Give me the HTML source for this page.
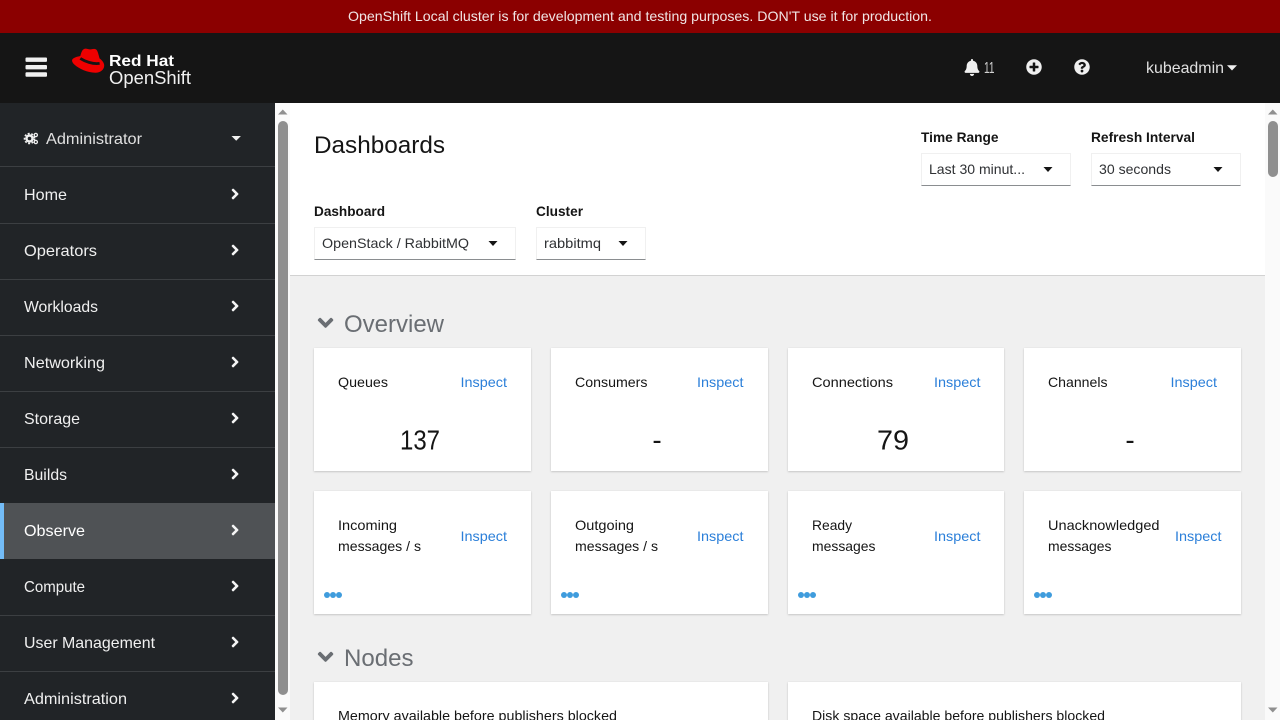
<!DOCTYPE html>
<html lang="en">
<head>
<meta charset="utf-8">
<title>Dashboards · Red Hat OpenShift</title>
<style>
html,body{margin:0;padding:0;width:1280px;height:720px;overflow:hidden;background:#f0f0f0}
body{position:relative;font-family:"Liberation Sans",sans-serif}
.b{position:absolute;box-sizing:border-box}
.card{position:absolute;background:#fff;box-shadow:0 1px 2px rgba(3,3,3,.16),0 0 2px rgba(3,3,3,.06)}
.sel{position:absolute;background:#fff;box-sizing:border-box;border:1px solid #f0f0f0;border-bottom:1px solid #8a8d90}
svg.o{position:absolute;left:0;top:0}
text{font-family:"Liberation Sans",sans-serif;font-size:14px;fill:#151515}
.w{fill:#fff}.nav{font-size:16px;fill:#f0f0f0}.lnk{fill:#2b7fd9}.h2{font-size:24px;fill:#6a6e73}.lb{font-weight:bold}.sv{fill:#2f3134}.num{font-size:28px}
</style>
</head>
<body>
<div class="b" style="left:0;top:0;width:1280px;height:33px;background:#8b0000"></div>
<div class="b" style="left:0;top:33px;width:1280px;height:70px;background:#151515"></div>
<div class="b" style="left:0;top:103px;width:275px;height:617px;background:#212427"></div>
<div class="b" style="left:0;top:166px;width:275px;height:1px;background:#3c3f42"></div>
<div class="b" style="left:0;top:223px;width:275px;height:1px;background:#3c3f42"></div>
<div class="b" style="left:0;top:279px;width:275px;height:1px;background:#3c3f42"></div>
<div class="b" style="left:0;top:335px;width:275px;height:1px;background:#3c3f42"></div>
<div class="b" style="left:0;top:391px;width:275px;height:1px;background:#3c3f42"></div>
<div class="b" style="left:0;top:447px;width:275px;height:1px;background:#3c3f42"></div>
<div class="b" style="left:0;top:503px;width:275px;height:1px;background:#3c3f42"></div>
<div class="b" style="left:0;top:615px;width:275px;height:1px;background:#3c3f42"></div>
<div class="b" style="left:0;top:671px;width:275px;height:1px;background:#3c3f42"></div>
<div class="b" style="left:0;top:503px;width:275px;height:56px;background:#4f5255;border-left:4px solid #73bcf7"></div>

<div class="b" style="left:275px;top:103px;width:15px;height:617px;background:#fafafa"></div>
<div class="b" style="left:278px;top:121px;width:10px;height:574px;border-radius:5px;background:#8f8f8f"></div>

<div class="b" style="left:290px;top:103px;width:975px;height:172px;background:#fff"></div>
<div class="b" style="left:290px;top:275px;width:975px;height:1px;background:#d2d2d2"></div>
<div class="b" style="left:1265px;top:103px;width:15px;height:617px;background:#fafafa"></div>
<div class="b" style="left:1268px;top:121px;width:10px;height:56px;border-radius:5px;background:#8f8f8f"></div>

<div class="sel" style="left:921px;top:153px;width:150px;height:33px"></div>
<div class="sel" style="left:1091px;top:153px;width:150px;height:33px"></div>
<div class="sel" style="left:314px;top:227px;width:202px;height:33px"></div>
<div class="sel" style="left:536px;top:227px;width:110px;height:33px"></div>

<div class="card" style="left:314px;top:348px;width:217px;height:123px"></div>
<div class="card" style="left:551px;top:348px;width:217px;height:123px"></div>
<div class="card" style="left:788px;top:348px;width:216px;height:123px"></div>
<div class="card" style="left:1024px;top:348px;width:217px;height:123px"></div>
<div class="card" style="left:314px;top:491px;width:217px;height:123px"></div>
<div class="card" style="left:551px;top:491px;width:217px;height:123px"></div>
<div class="card" style="left:788px;top:491px;width:216px;height:123px"></div>
<div class="card" style="left:1024px;top:491px;width:217px;height:123px"></div>
<div class="card" style="left:314px;top:682px;width:454px;height:60px"></div>
<div class="card" style="left:788px;top:682px;width:453px;height:60px"></div>

<svg class="o" width="1280" height="720" viewBox="0 0 1280 720" xmlns="http://www.w3.org/2000/svg">
<defs>
<path id="ar" d="M285.476 272.971L91.132 467.314c-9.373 9.373-24.569 9.373-33.941 0l-22.667-22.667c-9.357-9.357-9.375-24.522-.04-33.901L188.505 256 34.484 101.255c-9.335-9.379-9.317-24.544.04-33.901l22.667-22.667c9.373-9.373 24.569-9.373 33.941 0L285.475 239.03c9.373 9.372 9.373 24.568.001 33.941z"/>
<path id="ad" d="M143 352.3L7 216.3c-9.4-9.4-9.4-24.6 0-33.9l22.6-22.6c9.4-9.4 24.6-9.4 33.9 0l96.4 96.4 96.4-96.4c9.4-9.4 24.6-9.4 33.9 0l22.6 22.6c9.4 9.4 9.4 24.6 0 33.9l-136 136c-9.2 9.4-24.4 9.4-33.8 0z"/>
<g id="dots" fill="#3f9cdd"><circle cx="3" cy="3" r="3"/><circle cx="9" cy="3" r="3"/><circle cx="15" cy="3" r="3"/></g>
</defs>

<text x="640" y="21" text-anchor="middle" class="w" textLength="584" lengthAdjust="spacingAndGlyphs" style="fill:#f0e4e4">OpenShift Local cluster is for development and testing purposes. DON'T use it for production.</text>

<g fill="#f0f0f0">
<rect x="25.5" y="57.5" width="21.5" height="4.4" rx="1"/>
<rect x="25.5" y="65" width="21.5" height="4.4" rx="1"/>
<rect x="25.5" y="72.3" width="21.5" height="4.4" rx="1"/>
</g>

<path fill="#ee0000" d="M80.3 56C81.3 52.5 82 50 84 49 86 48 88 49.4 90 49.4 92 49.4 94 48.2 96 49.4 97.6 50.4 98.5 54.5 99.6 58.5 101.5 59.8 104.2 62.5 104.2 65.5 104.2 70 100 72.7 95.5 72.7 87.5 72.7 79 68.8 74.6 64.8 72.8 63.1 71.6 61.3 72.2 59.8 72.9 57.9 76.5 56.8 80.3 56Z"/>
<path fill="none" stroke="#151515" stroke-width="2.8" d="M80.3 58.4C85 61.4 92.5 64.4 99.6 63.4"/>

<text x="109" y="66" class="w lb" style="font-size:16px" textLength="65" lengthAdjust="spacingAndGlyphs">Red Hat</text>
<text x="109" y="84" style="font-size:18px;fill:#f0f0f0" textLength="82" lengthAdjust="spacingAndGlyphs">OpenShift</text>

<svg x="964" y="59" width="16" height="17" viewBox="0 0 448 512" fill="#f0f0f0"><path d="M224 512c35.32 0 63.97-28.65 63.97-64H160.03c0 35.35 28.65 64 63.97 64zm215.39-149.71c-19.32-20.76-55.47-51.99-55.47-154.29 0-77.7-54.48-139.9-127.94-155.16V32c0-17.67-14.32-32-31.98-32s-31.98 14.33-31.98 32v20.84C118.56 68.1 64.08 130.3 64.08 208c0 102.3-36.15 133.53-55.47 154.29-6 6.45-8.66 14.16-8.61 21.71.11 16.4 12.98 32 32.1 32h383.8c19.12 0 32-15.6 32.1-32 .05-7.55-2.61-15.27-8.61-21.71z"/></svg>
<text x="984" y="73" style="font-size:16px;fill:#d2d2d2" textLength="10.5" lengthAdjust="spacingAndGlyphs">11</text>
<svg x="1026" y="59" width="16" height="16" viewBox="0 0 512 512" fill="#f0f0f0"><path d="M256 8C119 8 8 119 8 256s111 248 248 248 248-111 248-248S393 8 256 8zm144 276c0 6.6-5.4 12-12 12h-92v92c0 6.6-5.4 12-12 12h-56c-6.6 0-12-5.4-12-12v-92h-92c-6.6 0-12-5.4-12-12v-56c0-6.6 5.4-12 12-12h92v-92c0-6.6 5.4-12 12-12h56c6.6 0 12 5.4 12 12v92h92c6.6 0 12 5.4 12 12v56z"/></svg>
<svg x="1074" y="59" width="16" height="16" viewBox="0 0 512 512" fill="#f0f0f0"><path d="M504 256c0 136.997-111.043 248-248 248S8 392.997 8 256C8 119.083 119.043 8 256 8s248 111.083 248 248zM262.655 90c-54.497 0-89.255 22.957-116.549 63.758-3.536 5.286-2.353 12.415 2.715 16.258l34.699 26.31c5.205 3.947 12.621 3.008 16.665-2.122 17.864-22.658 30.113-35.797 57.303-35.797 20.429 0 45.698 13.148 45.698 32.958 0 14.976-12.363 22.667-32.534 33.976C247.128 238.528 216 254.941 216 296v4c0 6.627 5.373 12 12 12h56c6.627 0 12-5.373 12-12v-1.333c0-28.462 83.186-29.647 83.186-106.667 0-58.002-60.165-102-116.531-102zM256 338c-25.365 0-46 20.635-46 46 0 25.364 20.635 46 46 46s46-20.636 46-46c0-25.365-20.635-46-46-46z"/></svg>
<text x="1146" y="73" class="nav" style="fill:#e0e0e0" textLength="78" lengthAdjust="spacingAndGlyphs">kubeadmin</text>
<path fill="#f0f0f0" d="M1227 65.3h10l-5 5.2z"/>

<g fill="#f0f0f0">
<circle cx="29.5" cy="138.5" r="3" fill="none" stroke="#f0f0f0" stroke-width="2.4"/>
<circle cx="29.5" cy="138.5" r="5" fill="none" stroke="#f0f0f0" stroke-width="1.6" stroke-dasharray="2 1.6"/>
<circle cx="35.8" cy="135" r="1.6" fill="none" stroke="#f0f0f0" stroke-width="1.3"/>
<circle cx="35.8" cy="142" r="1.6" fill="none" stroke="#f0f0f0" stroke-width="1.3"/>
</g>
<text x="46" y="144" class="nav" style="fill:#e0e0e0" textLength="96" lengthAdjust="spacingAndGlyphs">Administrator</text>
<path fill="#f0f0f0" d="M231.5 136h9.4l-4.7 4.8z"/>

<text x="24" y="200" class="nav" textLength="43" lengthAdjust="spacingAndGlyphs">Home</text>
<text x="24" y="256" class="nav" textLength="73" lengthAdjust="spacingAndGlyphs">Operators</text>
<text x="24" y="312" class="nav" textLength="74" lengthAdjust="spacingAndGlyphs">Workloads</text>
<text x="24" y="368" class="nav" textLength="81" lengthAdjust="spacingAndGlyphs">Networking</text>
<text x="24" y="424" class="nav" textLength="56" lengthAdjust="spacingAndGlyphs">Storage</text>
<text x="24" y="480" class="nav" textLength="43" lengthAdjust="spacingAndGlyphs">Builds</text>
<text x="24" y="536" class="nav" style="fill:#fff" textLength="61" lengthAdjust="spacingAndGlyphs">Observe</text>
<text x="24" y="592" class="nav" textLength="61" lengthAdjust="spacingAndGlyphs">Compute</text>
<text x="24" y="648" class="nav" textLength="131" lengthAdjust="spacingAndGlyphs">User Management</text>
<text x="24" y="704" class="nav" textLength="103" lengthAdjust="spacingAndGlyphs">Administration</text>

<g fill="#f5f5f5" stroke="#f5f5f5" stroke-width="30" stroke-linejoin="round">
<use href="#ar" transform="translate(231.4 188.1) scale(.023)"/>
<use href="#ar" transform="translate(231.4 244.1) scale(.023)"/>
<use href="#ar" transform="translate(231.4 300.1) scale(.023)"/>
<use href="#ar" transform="translate(231.4 356.1) scale(.023)"/>
<use href="#ar" transform="translate(231.4 412.1) scale(.023)"/>
<use href="#ar" transform="translate(231.4 468.1) scale(.023)"/>
<use href="#ar" transform="translate(231.4 524.1) scale(.023)"/>
<use href="#ar" transform="translate(231.4 580.1) scale(.023)"/>
<use href="#ar" transform="translate(231.4 636.1) scale(.023)"/>
<use href="#ar" transform="translate(231.4 692.1) scale(.023)"/>
</g>

<g fill="#8f8f8f">
<path d="M278 114.5h9.5l-4.7-5z"/>
<path d="M278 707.5h9.5l-4.7 5z"/>
<path d="M1268 114.5h9.5l-4.7-5z"/>
<path d="M1268 707.5h9.5l-4.7 5z"/>
</g>

<text x="314" y="153" style="font-size:24px" textLength="131" lengthAdjust="spacingAndGlyphs">Dashboards</text>
<text x="921" y="142" class="lb" textLength="77.5" lengthAdjust="spacingAndGlyphs">Time Range</text>
<text x="1091" y="142" class="lb" textLength="104" lengthAdjust="spacingAndGlyphs">Refresh Interval</text>
<text x="314" y="216" class="lb" textLength="71" lengthAdjust="spacingAndGlyphs">Dashboard</text>
<text x="536" y="216" class="lb" textLength="47" lengthAdjust="spacingAndGlyphs">Cluster</text>

<text x="929" y="174" class="sv" textLength="96" lengthAdjust="spacingAndGlyphs">Last 30 minut...</text>
<text x="1099" y="174" class="sv" textLength="72" lengthAdjust="spacingAndGlyphs">30 seconds</text>
<text x="322" y="248" class="sv" textLength="147" lengthAdjust="spacingAndGlyphs">OpenStack / RabbitMQ</text>
<text x="544" y="248" class="sv" textLength="57" lengthAdjust="spacingAndGlyphs">rabbitmq</text>
<g fill="#151515">
<path d="M1043.5 167h9l-4.5 5z"/>
<path d="M1213.5 167h9l-4.5 5z"/>
<path d="M488.5 241h9l-4.5 5z"/>
<path d="M618.5 241h9l-4.5 5z"/>
</g>

<g fill="#6a6e73">
<use href="#ad" transform="translate(317.8 310.4) scale(.0485)"/>
<use href="#ad" transform="translate(317.8 644.4) scale(.0485)"/>
</g>
<text x="344" y="332" class="h2" textLength="100" lengthAdjust="spacingAndGlyphs">Overview</text>
<text x="344" y="666" class="h2" textLength="69.5" lengthAdjust="spacingAndGlyphs">Nodes</text>

<text x="338" y="387" textLength="50" lengthAdjust="spacingAndGlyphs">Queues</text>
<text x="575" y="387" textLength="72.5" lengthAdjust="spacingAndGlyphs">Consumers</text>
<text x="812" y="387" textLength="81" lengthAdjust="spacingAndGlyphs">Connections</text>
<text x="1048" y="387" textLength="59.5" lengthAdjust="spacingAndGlyphs">Channels</text>
<text x="460.5" y="387" class="lnk" textLength="46.5" lengthAdjust="spacingAndGlyphs">Inspect</text>
<text x="697" y="387" class="lnk" textLength="46.5" lengthAdjust="spacingAndGlyphs">Inspect</text>
<text x="934" y="387" class="lnk" textLength="46.5" lengthAdjust="spacingAndGlyphs">Inspect</text>
<text x="1170.5" y="387" class="lnk" textLength="46.5" lengthAdjust="spacingAndGlyphs">Inspect</text>

<text x="420" y="449.5" class="num" text-anchor="middle" textLength="40" lengthAdjust="spacingAndGlyphs">137</text>
<text x="657" y="449.5" class="num" text-anchor="middle">-</text>
<text x="893" y="449.5" class="num" text-anchor="middle" textLength="32" lengthAdjust="spacingAndGlyphs">79</text>
<text x="1130" y="449.5" class="num" text-anchor="middle">-</text>

<text x="338" y="530" textLength="59" lengthAdjust="spacingAndGlyphs">Incoming</text>
<text x="338" y="551" textLength="83" lengthAdjust="spacingAndGlyphs">messages / s</text>
<text x="575" y="530" textLength="59" lengthAdjust="spacingAndGlyphs">Outgoing</text>
<text x="575" y="551" textLength="83" lengthAdjust="spacingAndGlyphs">messages / s</text>
<text x="812" y="530" textLength="40" lengthAdjust="spacingAndGlyphs">Ready</text>
<text x="812" y="551" textLength="63.5" lengthAdjust="spacingAndGlyphs">messages</text>
<text x="1048" y="530" textLength="111.5" lengthAdjust="spacingAndGlyphs">Unacknowledged</text>
<text x="1048" y="551" textLength="63.5" lengthAdjust="spacingAndGlyphs">messages</text>
<text x="460.5" y="541" class="lnk" textLength="46.5" lengthAdjust="spacingAndGlyphs">Inspect</text>
<text x="697" y="541" class="lnk" textLength="46.5" lengthAdjust="spacingAndGlyphs">Inspect</text>
<text x="934" y="541" class="lnk" textLength="46.5" lengthAdjust="spacingAndGlyphs">Inspect</text>
<text x="1175" y="541" class="lnk" textLength="46.5" lengthAdjust="spacingAndGlyphs">Inspect</text>

<use href="#dots" x="324" y="592"/>
<use href="#dots" x="561" y="592"/>
<use href="#dots" x="798" y="592"/>
<use href="#dots" x="1034" y="592"/>

<text x="338" y="720.5" textLength="279" lengthAdjust="spacingAndGlyphs">Memory available before publishers blocked</text>
<text x="812" y="720.5" textLength="293" lengthAdjust="spacingAndGlyphs">Disk space available before publishers blocked</text>
</svg>
</body>
</html>
